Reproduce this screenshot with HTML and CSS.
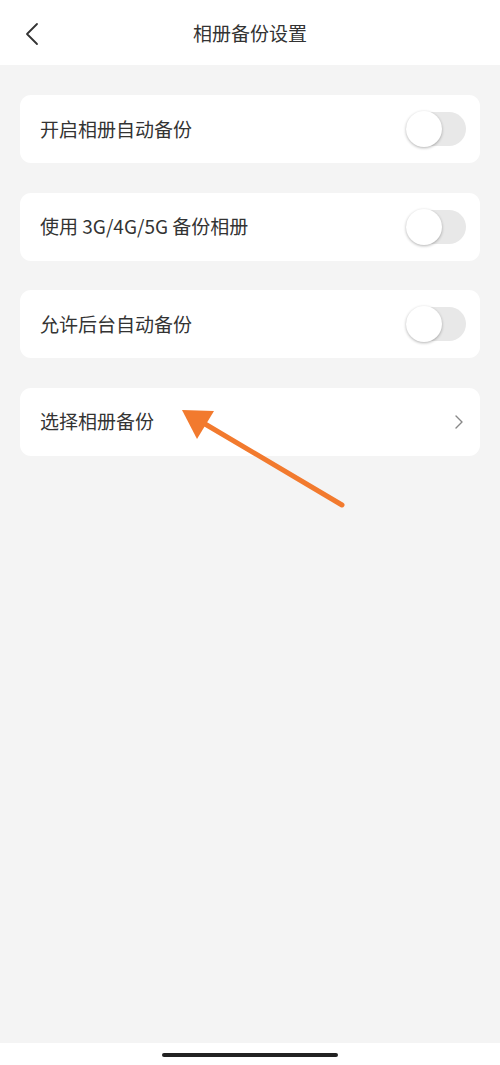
FILE: index.html
```html
<!DOCTYPE html>
<html lang="zh-CN">
<head>
    <meta charset="UTF-8">
    <meta name="viewport" content="width=device-width, initial-scale=1.0">
    <title>相册备份设置</title>
    <link rel="stylesheet" href="styles.css">
</head>
<body>

<div class="page">
    <div class="header">
        <span class="back">
            <svg width="14" height="24" viewBox="0 0 14 24"><path d="M12 2 L2 12 L12 22" fill="none" stroke="#333" stroke-width="1.8" stroke-linecap="round" stroke-linejoin="round"/></svg>
        </span>
        <h1 class="title">相册备份设置</h1>
    </div>

    <div class="content">
        <div class="card">
            <span class="label">开启相册自动备份</span>
            <span class="switch"><span class="knob"></span></span>
        </div>
        <div class="card">
            <span class="label">使用 3G/4G/5G 备份相册</span>
            <span class="switch"><span class="knob"></span></span>
        </div>
        <div class="card">
            <span class="label">允许后台自动备份</span>
            <span class="switch"><span class="knob"></span></span>
        </div>
        <div class="card">
            <span class="label">选择相册备份</span>
            <svg class="chevron" width="10" height="16" viewBox="0 0 10 16"><path d="M2 2 L8 8 L2 14" fill="none" stroke="#888" stroke-width="1.4" stroke-linecap="round" stroke-linejoin="round"/></svg>
        </div>

        <!-- annotation arrow -->
        <svg class="arrow" width="500" height="520" viewBox="0 0 500 520">
            <line x1="342" y1="505" x2="200" y2="421" stroke="#f27a2e" stroke-width="5" stroke-linecap="round"/>
            <polygon points="182,410 214,411 197,439" fill="#f27a2e"/>
        </svg>
    </div>

    <div class="footer">
        <span class="home-bar"></span>
    </div>
</div>

</body>
</html>
```

FILE: styles.css
```css
body {
    margin: 0;
    font-family: 'Noto Sans CJK SC', 'Noto Sans', sans-serif;
    color: #333;
}

.page {
    width: 500px;
    height: 1065px;
    display: flex;
    flex-direction: column;
    background-color: #f4f4f4;
    position: relative;
}

.header {
    height: 65px;
    background-color: #fff;
    display: flex;
    align-items: center;
    justify-content: center;
    position: relative;
}

.back {
    position: absolute;
    left: 25px;
    top: 22px;
}

.title {
    margin: 0;
    font-size: 19px;
    font-weight: normal;
    color: #333;
}

.content {
    flex: 1;
    padding: 30px 20px 0;
    display: flex;
    flex-direction: column;
    gap: 29.5px;
}

.card {
    height: 68px;
    background-color: #fff;
    border-radius: 11px;
    display: flex;
    align-items: center;
    justify-content: space-between;
    padding: 0 14px 0 20px;
}

.label {
    font-size: 19px;
    color: #333;
    margin-top: -2px;
}

.switch {
    width: 60px;
    height: 34px;
    border-radius: 17px;
    background-color: #e8e8e8;
    position: relative;
}

.knob {
    position: absolute;
    left: 0;
    top: -1px;
    width: 36px;
    height: 36px;
    border-radius: 50%;
    background-color: #fff;
    box-shadow: 0 1px 3px rgba(0, 0, 0, 0.3);
}

.chevron {
    margin-right: 2px;
}

.arrow {
    position: absolute;
    left: 0;
    top: 0;
    pointer-events: none;
}

.footer {
    height: 22px;
    background-color: #fff;
    display: flex;
    justify-content: center;
    align-items: center;
}

.home-bar {
    width: 176px;
    height: 4px;
    border-radius: 2px;
    background-color: #222;
    margin-top: 1px;
}
```
